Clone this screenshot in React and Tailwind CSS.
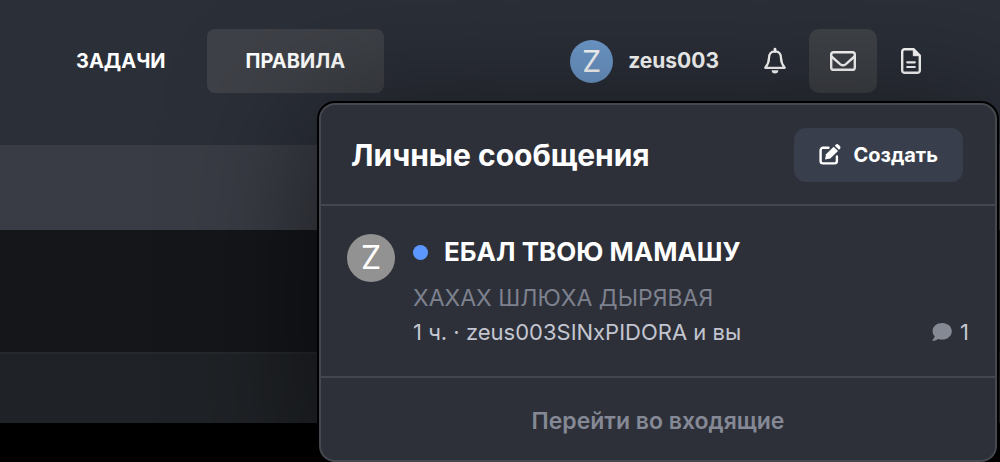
import React from 'react';

const BellIcon = () => (
  <svg width="24" height="28" viewBox="0 0 24 28" fill="none" aria-hidden="true">
    <path
      d="M12 4.400c-4 0-6 3-6 6.600 0 5-1.500 7-3.700 9.800h19.400c-2.200-2.800-3.700-4.800-3.700-9.800 0-3.600-2-6.600-6-6.600z"
      stroke="currentColor"
      strokeWidth="2.300"
      strokeLinejoin="round"
    />
    <path d="M12 2.200v2" stroke="currentColor" strokeWidth="2.800" strokeLinecap="round" />
    <path d="M8.700 23.200h6.600a3.300 3.200 0 0 1-6.600 0z" fill="currentColor" />
  </svg>
);

const MailIcon = () => (
  <svg width="26" height="20" viewBox="0 0 26 20" fill="none" stroke="currentColor" strokeWidth="2.400" aria-hidden="true">
    <rect x="1.200" y="1.200" width="23.600" height="17.600" rx="2.400" />
    <path d="M1.500 5.500l8.600 7.600c1.900 1.600 3.900 1.600 5.800 0l8.600-7.600" />
  </svg>
);

const FileIcon = () => (
  <svg width="20" height="26" viewBox="0 0 20 26" fill="none" stroke="currentColor" strokeWidth="2.400" aria-hidden="true">
    <path
      d="M12.500 1.200H3.600a2.400 2.400 0 0 0-2.400 2.400v18.800a2.400 2.400 0 0 0 2.400 2.400h12.800a2.400 2.400 0 0 0 2.400-2.400V7.500z"
      strokeLinejoin="round"
    />
    <path d="M12.300 1.500v6.200h6.300z" fill="currentColor" strokeWidth="1" />
    <path d="M6.200 14.300h7.600M6.200 19h7.600" strokeWidth="2.200" strokeLinecap="round" />
  </svg>
);

const EditIcon = () => (
  <svg width="22" height="22" viewBox="0 0 22 22" fill="none" aria-hidden="true">
    <path
      d="M9.500 3.800H4a2.400 2.400 0 0 0-2.400 2.400V17A2.400 2.400 0 0 0 4 19.400h11.500a2.400 2.400 0 0 0 2.400-2.400v-4.500"
      stroke="currentColor"
      strokeWidth="2.400"
      strokeLinecap="round"
    />
    <path d="M6 15.500l1-5.300 7.700-7.500 4.300 4.300-7.700 7.500z" fill="currentColor" />
    <path d="M15.800 1.700l.9-.9a2 2 0 0 1 2.800 0l1.300 1.300a2 2 0 0 1 0 2.800l-.9.9z" fill="currentColor" />
  </svg>
);

const CommentIcon = () => (
  <svg width="20" height="18" viewBox="0 0 20 18" fill="#858993" aria-hidden="true">
    <path d="M10.200 0C4.800 0 .6 3.500.6 8c0 2.100.8 3.900 2.100 5.300-.3 1.500-1.100 2.700-2.100 3.500-.4.400-.2 1 .4 1 2.100 0 3.800-.8 5-1.900 1.300.4 2.700.6 4.200.6 5.400 0 9.600-3.700 9.600-8.300S15.600 0 10.200 0z" />
  </svg>
);

const navItems = [
  { label: 'ЗАДАЧИ', active: false },
  { label: 'ПРАВИЛА', active: true },
];

const iconButtons = [
  { label: 'Уведомления', icon: BellIcon, active: false },
  { label: 'Личные сообщения', icon: MailIcon, active: true },
  { label: 'Закладки', icon: FileIcon, active: false },
];

const messages = [
  {
    id: 1,
    letter: 'Z',
    title: 'ЕБАЛ ТВОЮ МАМАШУ',
    excerpt: 'ХАХАХ ШЛЮХА ДЫРЯВАЯ',
    info: '1 ч. · zeus003SINxPIDORA и вы',
    replies: 1,
  },
];

const MessagesMenu = () => (
  <section className="absolute top-[103px] right-[3px] w-[678px] rounded-2xl border-2 border-[#45484f] bg-[#2d3039] shadow-[0_0_0_2px_#000,0_16px_130px_10px_rgba(0,0,0,0.5)]">
    <div className="flex h-[101px] items-center justify-between border-b-2 border-[#43464f] pr-8 pl-[30px]">
      <h2 className="text-[30px] leading-9 font-bold text-white">Личные сообщения</h2>
      <button className="flex h-[54px] items-center gap-3 rounded-xl bg-[#383e4b] px-[25px] text-xl font-bold text-white">
        <EditIcon />
        Создать
      </button>
    </div>

    <ul>
      {messages.map(message => (
        <li key={message.id} className="flex gap-[18px] px-[26px] py-7">
          <div className="flex size-12 shrink-0 items-center justify-center rounded-full bg-[#929292] text-[32px] text-white">
            {message.letter}
          </div>
          <div className="min-w-0 flex-1">
            <a href="#message" className="flex items-center gap-4 text-[26px] leading-9 font-bold text-white">
              <span className="size-[15px] rounded-full bg-[#5c97ff]" />
              {message.title}
            </a>
            <p className="mt-[10px] text-[23px] leading-9 text-[#7d818e]">{message.excerpt}</p>
            <div className="flex items-center justify-between text-[22px] leading-8 text-[#c3c6d0]">
              <span>{message.info}</span>
              <span className="flex items-center gap-2">
                <CommentIcon />
                {message.replies}
              </span>
            </div>
          </div>
        </li>
      ))}
    </ul>

    <a
      href="#inbox"
      className="flex h-[84px] items-center justify-center border-t-2 border-[#43464f] pt-1 text-[23px] font-semibold text-[#858995]"
    >
      Перейти во входящие
    </a>
  </section>
);

export default function App() {
  return (
    <div className="relative min-h-screen overflow-hidden bg-black font-['Inter',sans-serif]">
      <header className="flex h-[145px] items-start justify-between bg-[#2b2f38] pt-[29px] pr-[55px] pl-[37px]">
        <nav className="flex gap-0.5">
          {navItems.map(item => (
            <a
              key={item.label}
              href="#nav"
              className={`flex h-16 items-center rounded-lg px-[39px] text-xl font-bold text-white ${item.active ? 'bg-[#3e4147]' : ''}`}
            >
              {item.label}
            </a>
          ))}
        </nav>

        <div className="flex items-center">
          <a href="#profile" className="mr-[22px] flex items-center gap-[15px] text-[21px] font-bold text-white">
            <span className="flex size-[43px] items-center justify-center rounded-full bg-[#6f9bcd] text-[30px] font-normal">
              Z
            </span>
            zeus003
          </a>
          {iconButtons.map(({ label, icon: Icon, active }) => (
            <button
              key={label}
              aria-label={label}
              className={`flex h-16 w-[68px] items-center justify-center rounded-[10px] text-white ${active ? 'bg-[#3f4247]' : ''}`}
            >
              <Icon />
            </button>
          ))}
        </div>
      </header>

      <div className="h-[85px] bg-[#393c44]" />
      <div className="h-[122px] bg-[#15161a]" />
      <div className="h-[71px] border-t-2 border-[#25282c] bg-[#1f2226]" />

      <MessagesMenu />
    </div>
  );
}
